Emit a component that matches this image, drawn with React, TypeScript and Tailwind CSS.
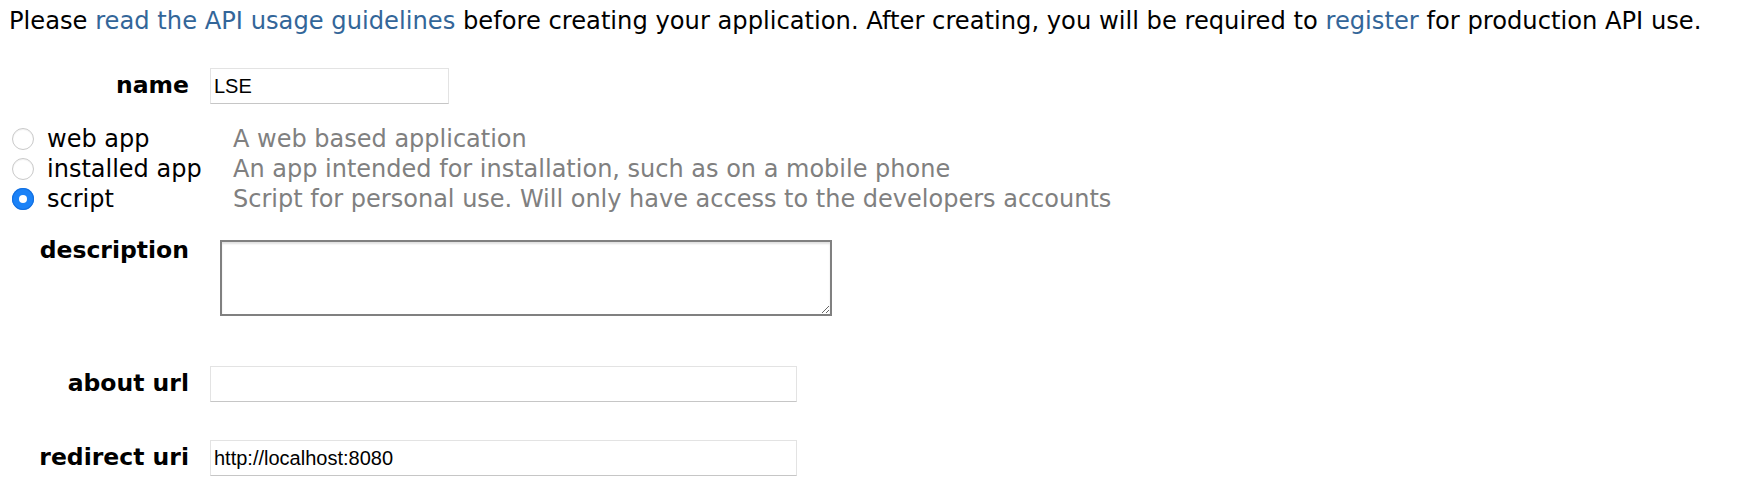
import { useState } from 'react';

const appTypes = [
    { id: 'web', label: 'web app', desc: 'A web based application' },
    { id: 'installed', label: 'installed app', desc: 'An app intended for installation, such as on a mobile phone' },
    { id: 'script', label: 'script', desc: 'Script for personal use. Will only have access to the developers accounts' },
];

const inputCls =
    "h-[36px] border border-[#e3e3e3] border-b-[#c6c6c6] bg-white px-[3px] text-[20px] text-black outline-none font-['Liberation_Sans',Arial,sans-serif]";

const App = () => {
    const [appType, setAppType] = useState('script');

    return (
        <div className="min-h-[496px] bg-white text-black font-['DejaVu_Sans',Verdana,sans-serif]">
            {/* Intro */}
            <p className="pt-[6px] pl-[9px] text-[24.2px] leading-[30px] whitespace-nowrap">
                Please <a href="#" className="text-[#336699]">read the API usage guidelines</a> before creating your application. After creating, you will be required to <a href="#" className="text-[#336699]">register</a> for production API use.
            </p>

            {/* name */}
            <div className="mt-[32px] flex items-center gap-[21px]">
                <label className="w-[189px] text-right text-[23.5px] font-bold">name</label>
                <input type="text" defaultValue="LSE" className={`${inputCls} w-[239px]`} />
            </div>

            {/* app type */}
            <div className="mt-[20px] flex flex-col">
                {appTypes.map((t) => (
                    <div key={t.id} className="flex items-center h-[30px] text-[24px] cursor-pointer" onClick={() => setAppType(t.id)}>
                        <div className="w-[233px] flex items-center">
                            {appType === t.id ? (
                                <span className="ml-[12px] mr-[13px] w-[22px] h-[22px] rounded-full bg-[#1b82f7] flex items-center justify-center shadow-[inset_0_0_0_1px_#1470e0]">
                                    <span className="w-[8px] h-[8px] rounded-full bg-white" />
                                </span>
                            ) : (
                                <span className="ml-[12px] mr-[13px] w-[22px] h-[22px] rounded-full bg-white border border-[#c9c9c9] shadow-[inset_0_1px_1px_rgba(0,0,0,0.06)]" />
                            )}
                            <span>{t.label}</span>
                        </div>
                        <span className="text-[#808080] whitespace-nowrap">{t.desc}</span>
                    </div>
                ))}
            </div>

            {/* description */}
            <div className="mt-[19px] flex items-start gap-[21px]">
                <label className="w-[189px] text-right text-[23.5px] font-bold">description</label>
                <textarea className="ml-[10px] mt-[7px] w-[612px] h-[76px] border-2 border-[#808080] bg-white shadow-[inset_0_2px_2px_rgba(0,0,0,0.12)] outline-none resize" />
            </div>

            {/* about url */}
            <div className="mt-[50px] flex items-center gap-[21px]">
                <label className="w-[189px] text-right text-[23.5px] font-bold">about url</label>
                <input type="text" className={`${inputCls} w-[587px]`} />
            </div>

            {/* redirect uri */}
            <div className="mt-[38px] flex items-center gap-[21px]">
                <label className="w-[189px] text-right text-[23.5px] font-bold">redirect uri</label>
                <input type="text" defaultValue="http://localhost:8080" className={`${inputCls} w-[587px]`} />
            </div>
        </div>
    );
};

export default App;
